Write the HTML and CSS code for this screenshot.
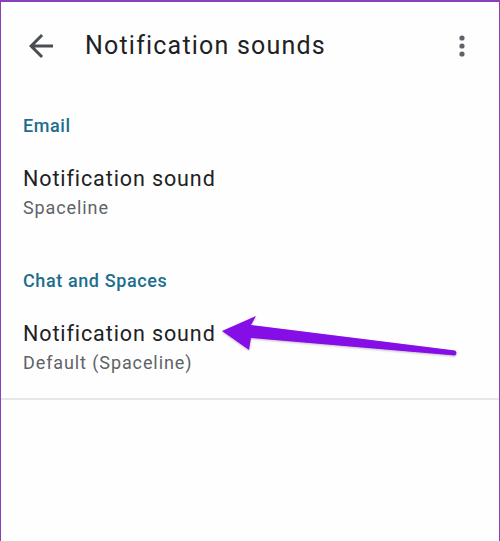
FILE: index.html
```html
<!DOCTYPE html>
<html>
<head>
<meta charset="utf-8">
<link rel="stylesheet" href="styles.css">
</head>
<body>
<div class="frame">
  <header class="appbar">
    <span class="back">
      <svg width="36" height="36" viewBox="0 0 24 24"><path d="M20 11H7.83l5.59-5.59L12 4l-8 8 8 8 1.41-1.41L7.83 13H20v-2z" fill="#4a4d51"/></svg>
    </span>
    <h1 class="title">Notification sounds</h1>
    <span class="more">
      <svg width="10" height="24" viewBox="0 0 10 24"><circle cx="5" cy="4" r="2.6" fill="#5f6368"/><circle cx="5" cy="12" r="2.6" fill="#5f6368"/><circle cx="5" cy="20" r="2.6" fill="#5f6368"/></svg>
    </span>
  </header>
  <section class="group first">
    <h2 class="group-title">Email</h2>
    <div class="item">
      <div class="item-title">Notification sound</div>
      <div class="item-sub">Spaceline</div>
    </div>
  </section>
  <section class="group">
    <h2 class="group-title">Chat and Spaces</h2>
    <div class="item">
      <div class="item-title">Notification sound</div>
      <div class="item-sub">Default (Spaceline)</div>
    </div>
  </section>
  <hr class="divider">
  <svg class="callout" width="500" height="541" viewBox="0 0 500 541">
    <defs>
      <filter id="sh" x="-10%" y="-50%" width="120%" height="200%">
        <feDropShadow dx="0" dy="1" stdDeviation="1" flood-color="#000" flood-opacity="0.25"/>
      </filter>
    </defs>
    <path d="M222 331 L256 316 L251 325 L455 350.5 Q458 353 455 355.5 L251 338 L249 350 Z" fill="#8508e6" filter="url(#sh)"/>
  </svg>
</div>
</body>
</html>
```
FILE: styles.css
```css
html, body {
  margin: 0;
  padding: 0;
  background: #fff;
}
body {
  width: 500px;
  height: 541px;
  font-family: Roboto, "Noto Sans", Arial, sans-serif;
}
.frame {
  position: relative;
  box-sizing: border-box;
  width: 500px;
  height: 541px;
  border: 1px solid #8a3fbd;
  border-top-width: 2px;
  border-bottom: none;
  background: #fefefe;
}
.appbar {
  display: flex;
  align-items: center;
  height: 88px;
  padding: 0 0 0 22px;
}
.back {
  display: flex;
  width: 36px;
  height: 36px;
}
.title {
  margin: 0 0 0 26px;
  font-size: 25px;
  font-weight: 400;
  color: #202124;
  line-height: 30px;
  letter-spacing: 1.2px;
  flex: 1;
}
.more {
  display: flex;
  margin-right: 32px;
}
.group {
  padding: 0 22px;
}
.group.first {
  padding-top: 24px;
}
.group + .group {
  margin-top: 49px;
}
.group-title {
  margin: 0;
  font-size: 18px;
  line-height: 24px;
  font-weight: 500;
  letter-spacing: 0.6px;
  color: #1c6e8e;
}
.item {
  margin-top: 27px;
}
.item-title {
  font-size: 21.5px;
  line-height: 28px;
  letter-spacing: 0.9px;
  color: #202124;
}
.item-sub {
  margin-top: 3px;
  font-size: 18px;
  line-height: 24px;
  letter-spacing: 0.9px;
  color: #5f6368;
}
.divider {
  margin: 23px 0 0 0;
  border: none;
  border-top: 2px solid #e6e6e6;
  height: 0;
}
.callout {
  position: absolute;
  left: -1px;
  top: -2px;
  pointer-events: none;
}
```
